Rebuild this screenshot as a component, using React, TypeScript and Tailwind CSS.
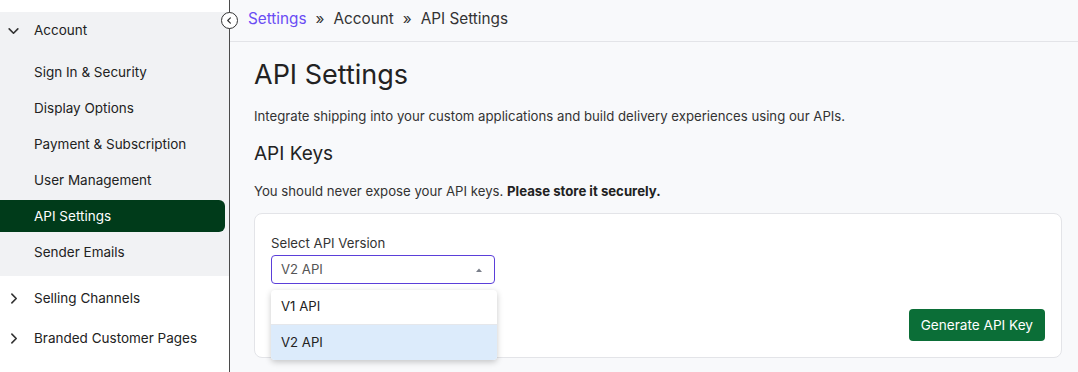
import React from "react";

const ChevronDown = () => (
  <svg className="h-[13px] w-[13px]" viewBox="0 0 12 12" fill="none" stroke="currentColor" strokeWidth="1.5" strokeLinecap="round" strokeLinejoin="round">
    <path d="M2 4.5L6 8.5l4-4" />
  </svg>
);

const ChevronRight = () => (
  <svg className="h-[13px] w-[13px]" viewBox="0 0 12 12" fill="none" stroke="currentColor" strokeWidth="1.5" strokeLinecap="round" strokeLinejoin="round">
    <path d="M4.5 2L8.5 6l-4 4" />
  </svg>
);

const accountItems = [
  "Sign In & Security",
  "Display Options",
  "Payment & Subscription",
  "User Management",
  "API Settings",
  "Sender Emails",
];

const Sidebar = () => (
  <aside className="relative w-[230px] shrink-0 border-r border-[#4b4b4b] bg-white pt-3">
    <div className="bg-[#f1f2f4] pb-2">
      <div className="flex h-9 items-center text-[13.5px] text-[#222]">
        <span className="flex w-[34px] justify-center pr-2 text-[#333]">
          <ChevronDown />
        </span>
        Account
      </div>
      <div className="flex flex-col gap-1 pt-2">
        {accountItems.map((item) => {
          const active = item === "API Settings";
          return (
            <div
              key={item}
              className={`mr-1 flex h-8 items-center rounded-r-md pl-[34px] text-[13.5px] ${
                active ? "bg-[#003b1a] text-white" : "text-[#222]"
              }`}
            >
              {item}
            </div>
          );
        })}
      </div>
    </div>
    <div className="pt-[2px]">
      {["Selling Channels", "Branded Customer Pages"].map((item) => (
        <div key={item} className="flex h-10 items-center text-[13.5px] text-[#222]">
          <span className="flex w-[34px] justify-center pr-2 text-[#333]">
            <ChevronRight />
          </span>
          {item}
        </div>
      ))}
    </div>
    <button className="absolute right-[-9px] top-[12px] flex h-[17px] w-[17px] items-center justify-center rounded-full border border-[#333] bg-white text-[#333]">
      <svg className="h-[9px] w-[9px]" viewBox="0 0 10 10" fill="none" stroke="currentColor" strokeWidth="1.3" strokeLinecap="round" strokeLinejoin="round">
        <path d="M6 2L3 5l3 3" />
      </svg>
    </button>
  </aside>
);

export default function App() {
  return (
    <div className="flex h-[372px] w-[1078px] overflow-hidden bg-[#f8f9fb] font-['Inter',sans-serif] text-[#222]">
      <Sidebar />
      <main className="flex min-w-0 flex-1 flex-col">
        <div className="flex h-[42px] items-center border-b border-[#e3e4e8] pl-[18px] pb-[3px] text-[15.3px] text-[#333]">
          <span className="text-[#6a4df4]">Settings</span>
          <span className="mx-[9px] text-[#333]">»</span>
          <span>Account</span>
          <span className="mx-[9px] text-[#333]">»</span>
          <span>API Settings</span>
        </div>
        <div className="px-4 pl-6">
          <h1 className="mt-[15px] text-[27px] leading-[36px] text-[#222]">API Settings</h1>
          <p className="mt-[13px] text-[13.2px] leading-5 text-[#333]">
            Integrate shipping into your custom applications and build delivery experiences using our APIs.
          </p>
          <h2 className="mt-[15px] text-[19px] leading-[26px] text-[#222]">API Keys</h2>
          <p className="mt-[14px] text-[13.2px] leading-5 text-[#333]">
            You should never expose your API keys. <span className="font-bold text-[#222]">Please store it securely.</span>
          </p>
          <div className="mt-[12px] flex items-end justify-between rounded-lg border border-[#e3e4e8] bg-white px-4 pb-4 pt-[19px]">
            <div className="relative">
              <label className="block text-[13.2px] leading-5 text-[#333]">Select API Version</label>
              <div className="mt-[2px] flex h-[29px] w-[224px] items-center justify-between rounded border border-[#5b3fd9] bg-white pl-[9px] pr-[11px] text-[13.2px] text-[#555]">
                V2 API
                <svg className="h-2 w-2" viewBox="0 0 8 8">
                  <path d="M1 6L4 2.5L7 6Z" fill="#7a7f8a" />
                </svg>
              </div>
              <div className="h-[57px]" />
              <div className="absolute left-0 top-[57px] w-[226px] overflow-hidden rounded bg-white text-[13.2px] text-[#222] shadow-[0_2px_6px_rgba(0,0,0,0.22)]">
                <div className="flex h-[35px] items-center border-b border-[#e5e7eb] pl-[10px]">V1 API</div>
                <div className="flex h-[35px] items-center bg-[#dcebfb] pl-[10px]">V2 API</div>
              </div>
            </div>
            <button className="flex h-[32px] items-center rounded bg-[#0b6e37] px-3 text-[13.6px] text-white">
              Generate API Key
            </button>
          </div>
        </div>
      </main>
    </div>
  );
}
